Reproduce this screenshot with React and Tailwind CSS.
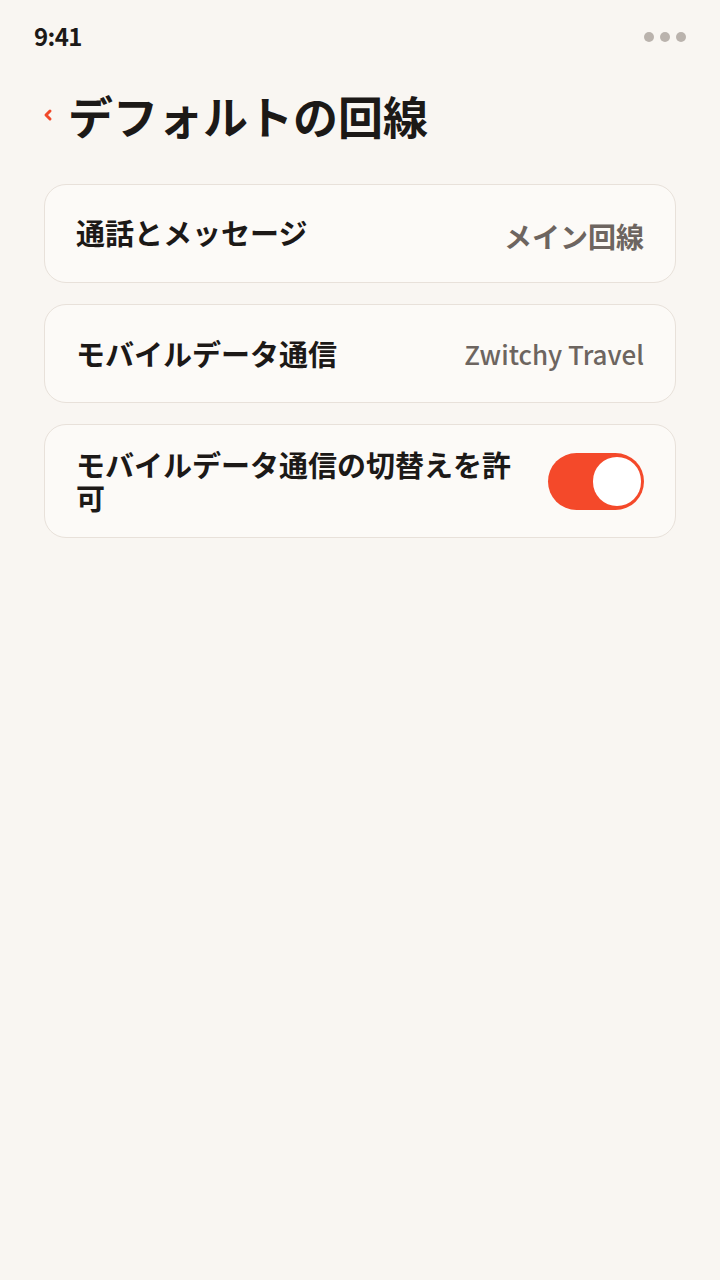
export default function App() {
  const font = { fontFamily: '"Noto Sans CJK JP", "Noto Sans", sans-serif' }

  return (
    <div className="min-h-[1280px] w-[720px] bg-[#f9f6f2] text-[#1c1917]" style={font}>
      {/* Status bar */}
      <div className="flex items-center justify-between pl-[34px] pr-[34px] pt-[18px] h-[56px]">
        <span className="text-[24px] font-bold leading-none tracking-tight -mt-[2px]">9:41</span>
        <div className="flex gap-[6px]">
          <span className="w-[10px] h-[10px] rounded-full bg-[#bab3ad]" />
          <span className="w-[10px] h-[10px] rounded-full bg-[#bab3ad]" />
          <span className="w-[10px] h-[10px] rounded-full bg-[#bab3ad]" />
        </div>
      </div>

      {/* Title */}
      <div className="flex items-center pl-[42px] pt-[29px] h-[128px] pb-[39px]">
        <svg width="12" height="14" viewBox="0 0 12 14" className="mr-[14px]">
          <path d="M8 3 L4 7 L8 11" fill="none" stroke="#f1492a" strokeWidth="3" strokeLinecap="round" strokeLinejoin="round" />
        </svg>
        <h1 className="text-[45px] font-bold leading-none">デフォルトの回線</h1>
      </div>

      {/* Settings list */}
      <div className="flex flex-col gap-[21px] px-[44px]">
        <div className="flex items-center justify-between h-[99px] pl-[31px] pr-[31px] rounded-[22px] border border-[#e8e1da] bg-[#fcfaf7]">
          <span className="text-[29px] font-bold leading-none -mt-[2px]">通話とメッセージ</span>
          <span className="text-[28px] font-bold leading-none text-[#6d6560] mt-[4px]">メイン回線</span>
        </div>

        <div className="flex items-center justify-between h-[99px] pl-[31px] pr-[31px] rounded-[22px] border border-[#e8e1da] bg-[#fcfaf7]">
          <span className="text-[29px] font-bold leading-none">モバイルデータ通信</span>
          <span className="text-[26px] font-medium leading-none text-[#6d6560]">Zwitchy Travel</span>
        </div>

        <div className="flex items-center justify-between min-h-[114px] pl-[31px] pr-[31px] py-[22px] rounded-[22px] border border-[#e8e1da] bg-[#fcfaf7]">
          <span className="w-[450px] text-[29px] font-bold leading-[33px]">モバイルデータ通信の切替えを許可</span>
          <div className="relative w-[96px] h-[57px] rounded-full bg-[#f4492a] shrink-0">
            <span className="absolute right-[3px] top-[4px] w-[48px] h-[49px] rounded-full bg-white" />
          </div>
        </div>
      </div>
    </div>
  )
}
